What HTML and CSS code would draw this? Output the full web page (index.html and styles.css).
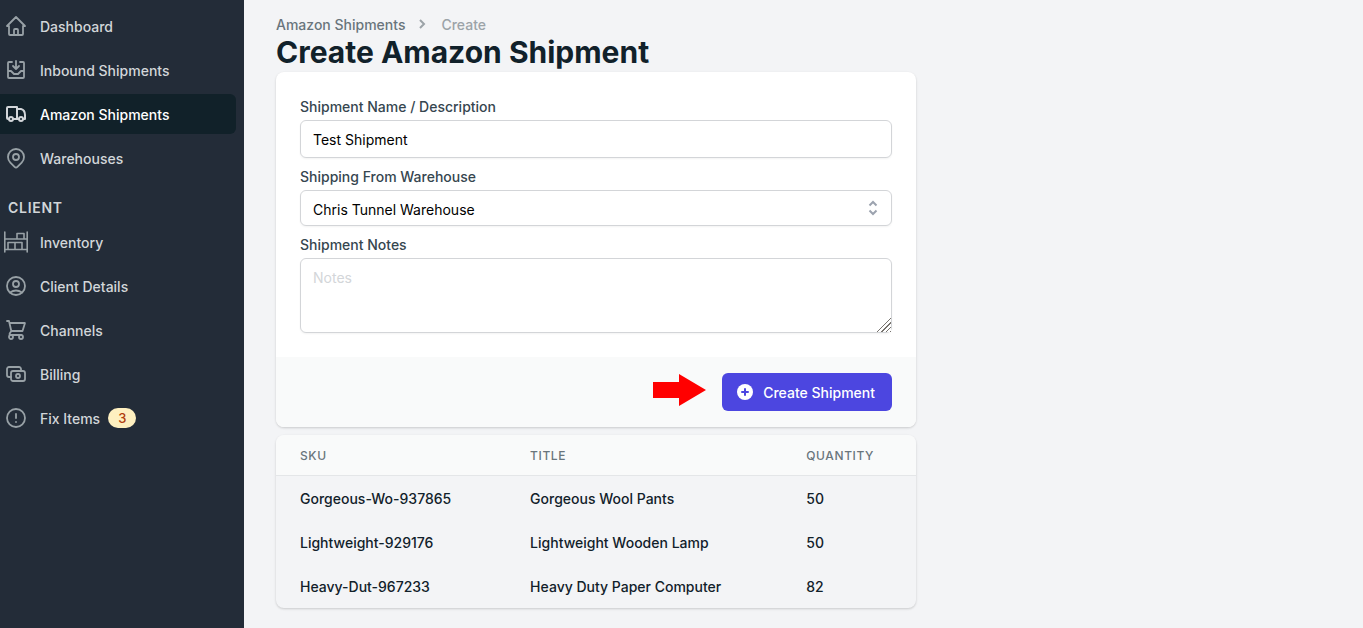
FILE: index.html
```html
<!DOCTYPE html>
<html lang="en">
<head>
<meta charset="utf-8">
<meta name="viewport" content="width=device-width, initial-scale=1">
<title>Create Amazon Shipment</title>
<link rel="stylesheet" href="styles.css">
</head>
<body>
<div class="app">
  <nav class="sidebar" aria-label="Main">
    <ul class="nav-list">
      <li><a class="nav-link" href="#">
        <svg class="nav-icon" viewBox="0 0 24 24"><path d="M5 12H3l9-9 9 9h-2M5 12v8a1 1 0 0 0 1 1h12a1 1 0 0 0 1-1v-8M10 21v-5a1 1 0 0 1 1-1h2a1 1 0 0 1 1 1v5"/></svg>
        Dashboard</a></li>
      <li><a class="nav-link" href="#">
        <svg class="nav-icon" viewBox="0 0 24 24"><path d="M8 4H5a1 1 0 0 0-1 1v14a1 1 0 0 0 1 1h14a1 1 0 0 0 1-1V5a1 1 0 0 0-1-1h-3M12 3v8M9 8l3 3 3-3M4 13h3l3 3h4l3-3h3"/></svg>
        Inbound Shipments</a></li>
      <li><a class="nav-link active" href="#" aria-current="page">
        <svg class="nav-icon" viewBox="0 0 24 24"><path d="M5 17H4a1 1 0 0 1-1-1V6a1 1 0 0 1 1-1h9v12H9M13 7h4q4 1 4 6v4h-2M13 17h2"/><circle cx="7" cy="17" r="2"/><circle cx="17" cy="17" r="2"/></svg>
        Amazon Shipments</a></li>
      <li><a class="nav-link" href="#">
        <svg class="nav-icon" viewBox="0 0 24 24"><path d="M17.657 16.657 13.414 20.9a2 2 0 0 1-2.827 0l-4.244-4.243a8 8 0 1 1 11.314 0z"/><circle cx="12" cy="11" r="3"/></svg>
        Warehouses</a></li>
    </ul>
    <h2 class="nav-heading">CLIENT</h2>
    <ul class="nav-list">
      <li><a class="nav-link" href="#">
        <svg class="nav-icon thin" viewBox="0 0 24 24"><path d="M.8 2v20M23.2 2v20M.8 9h22.4M.8 19.500h22.400M13 9V3.500h7V9M4 19.500v-7h14v7M11 12.500v7"/></svg>
        Inventory</a></li>
      <li><a class="nav-link" href="#">
        <svg class="nav-icon" viewBox="0 0 24 24"><circle cx="12" cy="12" r="9"/><circle cx="12" cy="10" r="3"/><path d="M6 18.500q6-4 12 0"/></svg>
        Client Details</a></li>
      <li><a class="nav-link" href="#">
        <svg class="nav-icon" viewBox="0 0 24 24"><path d="M3 3h2l2.300 10H18.500l2.500-8H5.500M7.300 13l-1.600 2.500a1 1 0 0 0 .9 1.500H17"/><circle cx="7" cy="19" r="2"/><circle cx="17" cy="19" r="2"/></svg>
        Channels</a></li>
      <li><a class="nav-link" href="#">
        <svg class="nav-icon" viewBox="0 0 24 24"><path d="M17 9V7a2 2 0 0 0-2-2H5a2 2 0 0 0-2 2v6a2 2 0 0 0 2 2h2"/><rect x="7" y="9" width="14" height="10" rx="2"/><circle cx="14" cy="14" r="2"/></svg>
        Billing</a></li>
      <li><a class="nav-link" href="#">
        <svg class="nav-icon" viewBox="0 0 24 24"><path d="M12 8v4m0 4h.01M21 12a9 9 0 1 1-18 0 9 9 0 0 1 18 0z"/></svg>
        Fix Items <span class="badge">3</span></a></li>
    </ul>
  </nav>

  <main class="content">
    <nav class="breadcrumb" aria-label="Breadcrumb">
      <a href="#">Amazon Shipments</a>
      <svg class="chevron" viewBox="0 0 20 20" aria-hidden="true"><path d="m7 5 4 4-4 4"/></svg>
      <span class="crumb-current">Create</span>
    </nav>
    <h1 class="title">Create Amazon Shipment</h1>

    <form class="card form">
      <div class="form-body">
        <div class="field">
          <label for="name">Shipment Name / Description</label>
          <input class="control" id="name" type="text" value="Test Shipment">
        </div>
        <div class="field">
          <label for="warehouse">Shipping From Warehouse</label>
          <div class="select-wrap">
            <select class="control select" id="warehouse"><option>Chris Tunnel Warehouse</option></select>
            <svg class="select-icon" viewBox="0 0 20 20" aria-hidden="true"><path d="m6.500 7.500 3.500-3.500 3.500 3.500M6.500 12.500l3.500 3.500 3.500-3.500"/></svg>
          </div>
        </div>
        <div class="field">
          <label for="notes">Shipment Notes</label>
          <textarea class="control notes" id="notes" placeholder="Notes"></textarea>
        </div>
      </div>
      <div class="form-footer">
        <svg class="arrow" viewBox="0 0 53 32" aria-hidden="true"><path d="M0 8h26V0l27 16-27 16v-8H0z"/></svg>
        <button class="button" type="button">
          <svg class="button-icon" viewBox="0 0 20 20" aria-hidden="true"><circle cx="10" cy="10" r="8"/><path d="M10 7v6M7 10h6"/></svg>
          Create Shipment
        </button>
      </div>
    </form>

    <div class="card">
      <table class="items">
        <thead><tr><th scope="col">SKU</th><th scope="col">TITLE</th><th scope="col">QUANTITY</th></tr></thead>
        <tbody>
          <tr><td>Gorgeous-Wo-937865</td><td>Gorgeous Wool Pants</td><td>50</td></tr>
          <tr><td>Lightweight-929176</td><td>Lightweight Wooden Lamp</td><td>50</td></tr>
          <tr><td>Heavy-Dut-967233</td><td>Heavy Duty Paper Computer</td><td>82</td></tr>
        </tbody>
      </table>
    </div>
  </main>
</div>
</body>
</html>
```
FILE: styles.css
```css
*,
*::before,
*::after {
  box-sizing: border-box;
}

body {
  margin: 0;
  background: #f3f4f6;
  color: #11212a;
  font: 500 14px/20px Inter, "Liberation Sans", sans-serif;
}

a {
  color: inherit;
  text-decoration: none;
}

.app {
  display: flex;
  min-height: 100vh;
}

.sidebar {
  flex: 0 0 244px;
  padding: 6px 8px 8px 0;
  background: #232c38;
  color: #d2d6d9;
}

.nav-list {
  display: grid;
  gap: 4px;
  margin: 0;
  padding: 0;
  list-style: none;
}

.nav-link {
  display: flex;
  align-items: center;
  height: 40px;
  padding: 1px 8px 0 4px;
  border-radius: 0 6px 6px 0;
}

.nav-link.active {
  background: #112129;
  color: #fff;
}

.nav-icon {
  width: 24px;
  height: 24px;
  margin: 0 12px 1px 0;
  fill: none;
  stroke: #98a1a6;
  stroke-width: 1.8;
  stroke-linecap: round;
  stroke-linejoin: round;
}

.nav-icon.thin {
  stroke-width: 1.6;
}

.active .nav-icon {
  stroke: #d2d6d9;
  stroke-width: 2;
}

.nav-heading {
  margin: 0;
  padding: 20px 8px 4px;
  font-size: 14px;
  font-weight: 600;
  line-height: 20px;
  letter-spacing: 0.05em;
}

.badge {
  margin: 0 0 2px 8px;
  padding: 2px 10px;
  border-radius: 10px;
  background: #fef0c0;
  color: #b13c0c;
  font-size: 13px;
  line-height: 16px;
}

.content {
  flex: 1;
  min-width: 0;
  padding: 15px 32px 16px;
}

.breadcrumb {
  display: flex;
  align-items: center;
  gap: 8px;
  color: #69757c;
}

.chevron {
  width: 20px;
  height: 20px;
  fill: none;
  stroke: #9ca3a8;
  stroke-width: 2;
}

.crumb-current {
  color: #9ca3a8;
}

.title {
  margin: 0 0 2px;
  font-size: 30px;
  font-weight: 700;
  line-height: 35px;
}

.card {
  max-width: 640px;
  border-radius: 8px;
  box-shadow: 0 1px 3px rgba(0, 0, 0, 0.1), 0 1px 2px rgba(0, 0, 0, 0.08);
  overflow: hidden;
}

.form {
  margin-bottom: 8px;
  background: #fff;
}

.form-body {
  display: grid;
  gap: 9px;
  padding: 25px 24px 24px;
}

.field {
  display: grid;
  gap: 3px;
  color: #36464f;
}

.control {
  display: block;
  width: 100%;
  height: 38px;
  margin: 0;
  padding: 8px 12px;
  border: 1px solid #d3d5d8;
  border-radius: 6px;
  background: #fff;
  box-shadow: 0 1px 2px rgba(0, 0, 0, 0.05);
  color: #000;
  font: 400 14px/20px Inter, "Liberation Sans", sans-serif;
}

.control::placeholder {
  color: #d3d6d9;
}

.select-wrap {
  position: relative;
}

.select {
  height: 36px;
  padding: 9px 12px 7px;
  appearance: none;
}

.select-icon {
  position: absolute;
  top: 8px;
  right: 9px;
  width: 20px;
  height: 20px;
  fill: none;
  stroke: #9ca3af;
  stroke-width: 2;
  pointer-events: none;
}

.notes {
  height: 75px;
  padding: 9px 12px 7px;
  resize: vertical;
}

.notes::-webkit-resizer {
  background:
    linear-gradient(135deg, #fff 50%, transparent 50%),
    repeating-linear-gradient(135deg, #fff 0 2px, #77736e 2px 3px);
}

.form-footer {
  display: flex;
  align-items: flex-start;
  justify-content: flex-end;
  gap: 16px;
  padding: 16px 24px;
  background: #f9fafa;
}

.arrow {
  width: 53px;
  height: 32px;
  margin-top: 1px;
  fill: #f00;
}

.button {
  display: flex;
  align-items: center;
  gap: 8px;
  height: 38px;
  padding: 2px 17px 0 13px;
  border: 0;
  border-radius: 6px;
  background: #4c46e0;
  color: #fff;
  font: 500 14px/20px Inter, "Liberation Sans", sans-serif;
}

.button-icon {
  width: 20px;
  height: 20px;
  margin-bottom: 2px;
  fill: #fff;
  stroke: none;
}

.button-icon path {
  stroke: #4c46e0;
  stroke-width: 2;
  stroke-linecap: round;
}

.items {
  width: 100%;
  border-collapse: separate;
  border-spacing: 0;
}

.items th,
.items td {
  padding: 13px 24px 11px;
  text-align: left;
}

.items th {
  border-bottom: 1px solid #e4e6e8;
  background: #f9fafa;
  color: #69757c;
  font-size: 12px;
  font-weight: 500;
  line-height: 16px;
  letter-spacing: 0.05em;
}
```
